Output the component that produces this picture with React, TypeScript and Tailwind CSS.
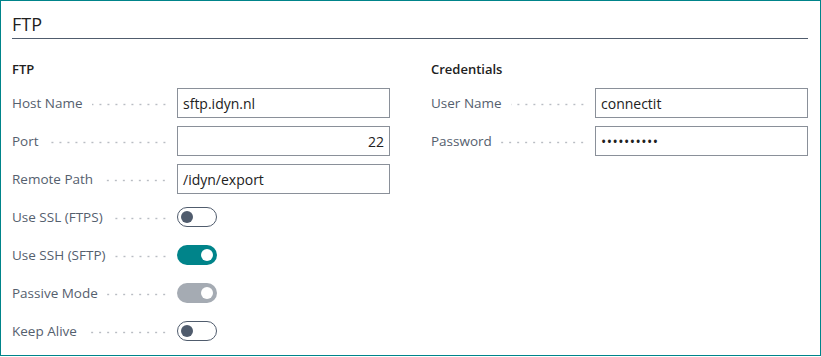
import React from 'react';

const font = { fontFamily: '"Segoe UI", "Open Sans", "Noto Sans", sans-serif' };

type Toggle = 'off' | 'on' | 'disabled';

function Dots() {
  return (
    <span className="mx-[9px] mt-[3px] h-[3px] flex-1 bg-[radial-gradient(circle,#b9bdc3_0.8px,transparent_1.2px)] bg-[length:8px_3px] bg-[position:right_center] bg-repeat-x" />
  );
}

function FieldRow({ label, children, labelWidth }: { label: string; children: React.ReactNode; labelWidth: string }) {
  return (
    <div className="flex h-[38px] items-center">
      <div className={`flex items-center ${labelWidth}`}>
        <span className="whitespace-nowrap text-[13.5px] text-[#55606e]">{label}</span>
        <Dots />
      </div>
      {children}
    </div>
  );
}

function TextBox({ value, right, mono }: { value: string; right?: boolean; mono?: boolean }) {
  return (
    <div
      className={`flex h-[30px] w-[213px] items-center border border-[#8a9099] bg-white px-[5px] text-[14px] text-[#212121] ${
        right ? 'justify-end' : ''
      } ${mono ? 'tracking-[0.5px]' : ''}`}
    >
      {value}
    </div>
  );
}

function Switch({ state }: { state: Toggle }) {
  if (state === 'off') {
    return (
      <div className="flex h-[20px] w-[40px] items-center rounded-full border border-[#505c6d] bg-white px-[3px]">
        <span className="h-[12px] w-[12px] rounded-full bg-[#505c6d]" />
      </div>
    );
  }
  const bg = state === 'on' ? 'bg-[#00848a]' : 'bg-[#a5abb3]';
  return (
    <div className={`flex h-[20px] w-[40px] items-center justify-end rounded-full px-[4px] ${bg}`}>
      <span className="h-[12px] w-[12px] rounded-full bg-white" />
    </div>
  );
}

export default function App() {
  return (
    <div style={font} className="h-[356px] w-[821px] border-[1.5px] border-[#00848a] bg-white">
      <div className="px-[11px] pt-[10px]">
        <div className="h-[28px] w-[796px] border-b border-[#505c6d] text-[18px] leading-[26px] text-[#212121]">FTP</div>

        <div className="mt-[16px] flex gap-[41px]">
          {/* FTP column */}
          <div className="w-[378px]">
            <div className="flex h-[29px] items-center text-[13px] font-semibold text-[#212121]">FTP</div>
            <FieldRow label="Host Name" labelWidth="w-[165px]">
              <TextBox value="sftp.idyn.nl" />
            </FieldRow>
            <FieldRow label="Port" labelWidth="w-[165px]">
              <TextBox value="22" right />
            </FieldRow>
            <FieldRow label="Remote Path" labelWidth="w-[165px]">
              <TextBox value="/idyn/export" />
            </FieldRow>
            <FieldRow label="Use SSL (FTPS)" labelWidth="w-[165px]">
              <Switch state="off" />
            </FieldRow>
            <FieldRow label="Use SSH (SFTP)" labelWidth="w-[165px]">
              <Switch state="on" />
            </FieldRow>
            <FieldRow label="Passive Mode" labelWidth="w-[165px]">
              <Switch state="disabled" />
            </FieldRow>
            <FieldRow label="Keep Alive" labelWidth="w-[165px]">
              <Switch state="off" />
            </FieldRow>
          </div>

          {/* Credentials column */}
          <div className="w-[377px]">
            <div className="flex h-[29px] items-center text-[13px] font-semibold text-[#212121]">Credentials</div>
            <FieldRow label="User Name" labelWidth="w-[164px]">
              <TextBox value="connectit" />
            </FieldRow>
            <FieldRow label="Password" labelWidth="w-[164px]">
              <TextBox value="••••••••••" mono />
            </FieldRow>
          </div>
        </div>
      </div>
    </div>
  );
}
